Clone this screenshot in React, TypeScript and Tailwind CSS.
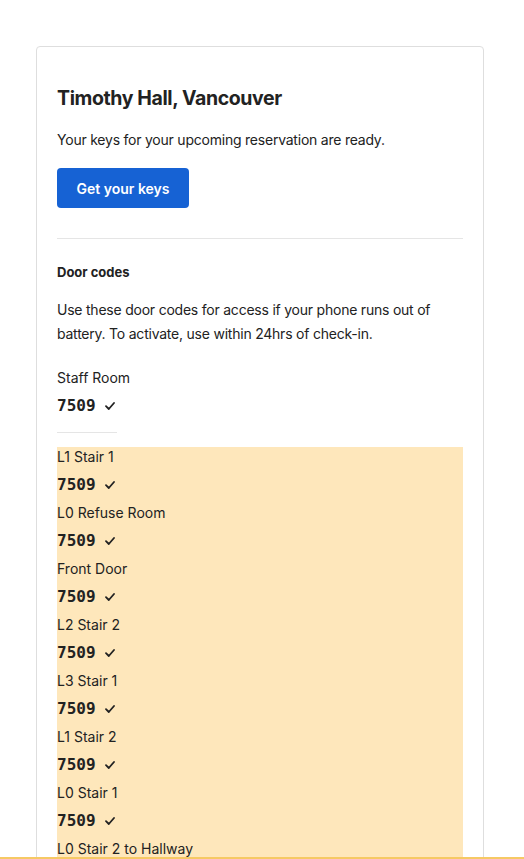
import React from "react";

const doors = [
  "L1 Stair 1",
  "L0 Refuse Room",
  "Front Door",
  "L2 Stair 2",
  "L3 Stair 1",
  "L1 Stair 2",
  "L0 Stair 1",
  "L0 Stair 2 to Hallway",
  "L2 Stair 1",
  "L3 Stair 2",
];

const Check = () => (
  <svg width="10" height="8" viewBox="0 0 10 8" fill="none" className="ml-[9px]">
    <path d="M1 4.2 L3.8 7 L9 1" stroke="#222" strokeWidth="1.8" strokeLinecap="round" strokeLinejoin="round" />
  </svg>
);

const Code = ({ value }: { value: string }) => (
  <div className="flex items-center h-[20px] mt-[8px]">
    <span className="font-['DejaVu_Sans_Mono',monospace] font-bold text-[16px] leading-[20px] text-[#222]">
      {value}
    </span>
    <Check />
  </div>
);

const App = () => {
  return (
    <div className="min-h-screen bg-white font-['Inter',sans-serif] text-[#222] pt-[46px]">
      <div className="ml-[36px] w-[448px] border border-[#dedede] rounded-[4px] px-[20px] pt-[37px] pb-[20px]">
        <h1 className="text-[19.5px] leading-[28px] font-bold tracking-[-0.02em]">Timothy Hall, Vancouver</h1>
        <p className="text-[14px] leading-[24px] mt-[16px] tracking-[-0.016em]">
          Your keys for your upcoming reservation are ready.
        </p>
        <button className="mt-[16px] w-[132px] h-[40px] bg-[#1662d4] text-white text-[14px] font-semibold rounded-[4px]">
          Get your keys
        </button>
        <div className="mt-[30px] border-t border-[#e5e5e5]" />
        <h2 className="mt-[23px] text-[13px] leading-[20px] font-bold">Door codes</h2>
        <p className="mt-[16px] text-[14px] leading-[24px] tracking-[-0.016em]">
          Use these door codes for access if your phone runs out of battery. To activate, use within 24hrs of check-in.
        </p>
        <div className="mt-[22px]">
          <div className="text-[14px] leading-[20px]">Staff Room</div>
          <Code value="7509" />
        </div>
        <div className="mt-[16px] w-[60px] border-t border-[#e5e5e5]" />
        <div className="mt-[14px] bg-[#fee7bb] pb-[8px]">
          {doors.map((d) => (
            <div key={d} className="pb-[8px]">
              <div className="text-[14px] leading-[20px]">{d}</div>
              <Code value="7509" />
            </div>
          ))}
        </div>
      </div>
      <div className="fixed bottom-0 left-0 right-0 h-[2px] bg-[#f6c964]" />
    </div>
  );
};

export default App;
